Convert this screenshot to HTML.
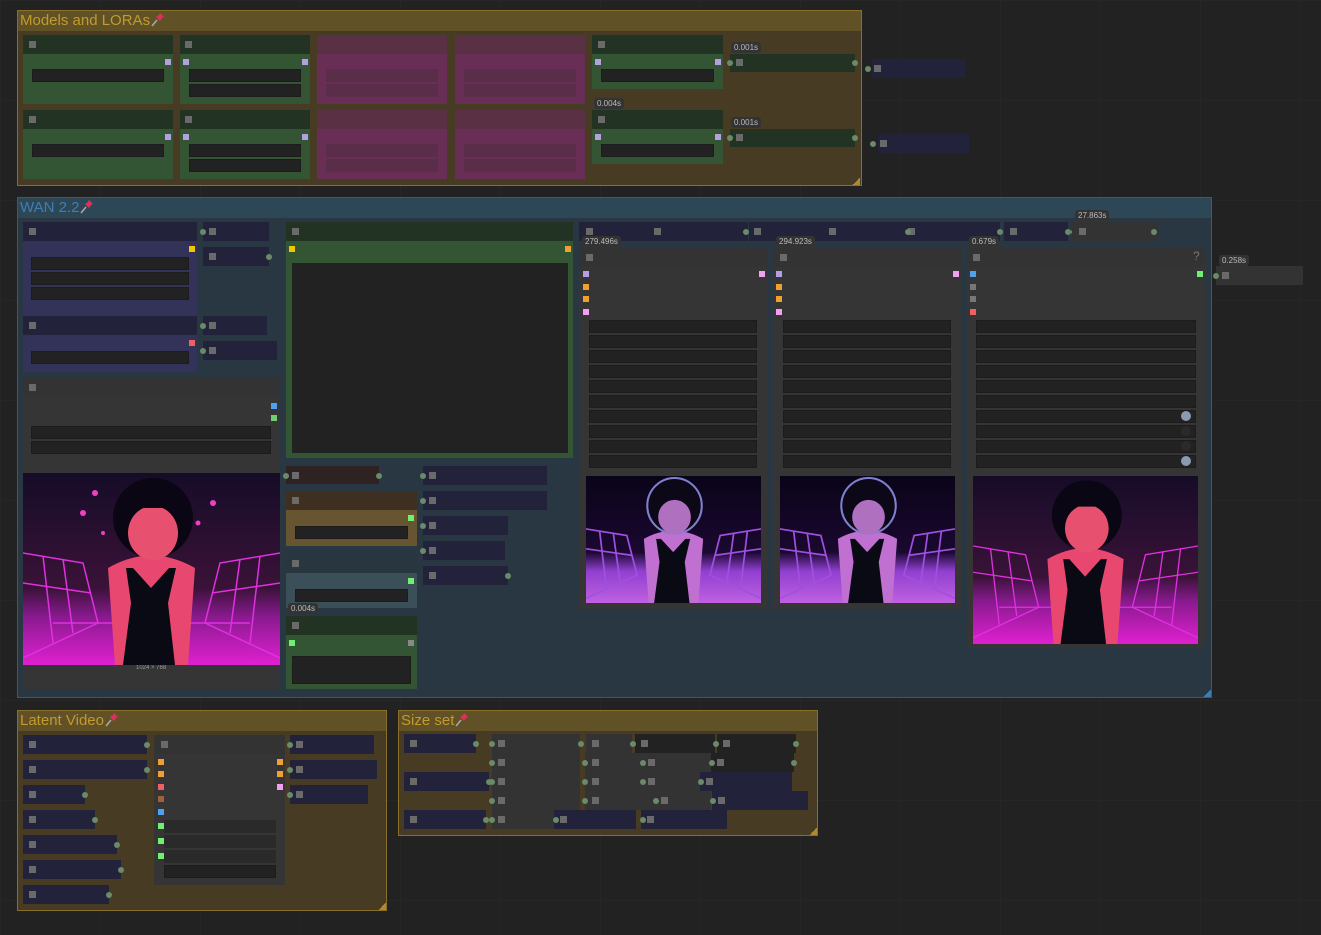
<!DOCTYPE html>
<html><head><meta charset="utf-8">
<style>
*{margin:0;padding:0;box-sizing:border-box}
body{width:1321px;height:935px;background:#222;position:relative;overflow:hidden;font-family:"Liberation Sans",sans-serif}
.b{position:absolute}
.grp{position:absolute;border:1px solid #8a6f2a}
.gh{position:absolute;left:0;top:0;right:0;height:20px;font-size:15px;line-height:20px;padding-left:2px}
.ic{position:absolute;width:7px;height:7px;background:#6a6a6a}
.s{position:absolute;width:6px;height:6px}
.d{position:absolute;width:6px;height:6px;border-radius:50%;background:#6a8a6a}
.w{position:absolute;background:#222;border:1px solid #1c1c1c}
.t{position:absolute;font-size:8px;color:#bbb;background:#333;padding:1px 3px;border-radius:3px;font-family:"Liberation Sans",sans-serif}
.grid{position:absolute;inset:0;background-image:linear-gradient(#262626 1px,transparent 1px),linear-gradient(90deg,#262626 1px,transparent 1px);background-size:100px 100px}
</style></head><body>
<div class="grid"></div>

<!-- Models and LORAs -->
<div class="grp" style="left:17px;top:10px;width:845px;height:176px;background:#473b24">
 <div class="gh" style="background:#615126;color:#c29a2e">Models and LORAs<svg width="16" height="16" viewBox="0 0 16 16" style="vertical-align:-2px"><path d="M2 15 L7 9" stroke="#aaa" stroke-width="1.5"/><path d="M6 6 L10 10 L12 7 L14 6 L10 2 L9 4 Z" fill="#e0305a"/></svg></div>
</div>
<!-- row1 -->
<div class="b" style="left:23px;top:35px;width:150px;height:19px;background:#233323"></div>
<div class="b" style="left:23px;top:54px;width:150px;height:50px;background:#335533"></div>
<div class="ic" style="left:29px;top:41px"></div>
<div class="s" style="left:165px;top:59px;background:#b4a0e0"></div>
<div class="w" style="left:32px;top:69px;width:132px;height:13px"></div>
<div class="b" style="left:180px;top:35px;width:130px;height:19px;background:#233323"></div>
<div class="b" style="left:180px;top:54px;width:130px;height:50px;background:#335533"></div>
<div class="ic" style="left:185px;top:41px"></div>
<div class="s" style="left:183px;top:59px;background:#b4a0e0"></div>
<div class="s" style="left:302px;top:59px;background:#b4a0e0"></div>
<div class="w" style="left:189px;top:69px;width:112px;height:13px"></div>
<div class="w" style="left:189px;top:84px;width:112px;height:13px"></div>
<div class="b" style="left:317px;top:35px;width:130px;height:19px;background:#5a3045"></div>
<div class="b" style="left:317px;top:54px;width:130px;height:50px;background:#692e55"></div>
<div class="b" style="left:326px;top:69px;width:112px;height:13px;background:#5a2d48"></div>
<div class="b" style="left:326px;top:84px;width:112px;height:13px;background:#5a2d48"></div>
<div class="b" style="left:455px;top:35px;width:130px;height:19px;background:#5a3045"></div>
<div class="b" style="left:455px;top:54px;width:130px;height:50px;background:#692e55"></div>
<div class="b" style="left:464px;top:69px;width:112px;height:13px;background:#5a2d48"></div>
<div class="b" style="left:464px;top:84px;width:112px;height:13px;background:#5a2d48"></div>
<div class="b" style="left:592px;top:35px;width:131px;height:19px;background:#233323"></div>
<div class="b" style="left:592px;top:54px;width:131px;height:35px;background:#335533"></div>
<div class="ic" style="left:598px;top:41px"></div>
<div class="s" style="left:595px;top:59px;background:#b4a0e0"></div>
<div class="s" y style="left:715px;top:59px;background:#b4a0e0"></div>
<div class="w" style="left:601px;top:69px;width:113px;height:13px"></div>
<div class="b" style="left:730px;top:54px;width:125px;height:18px;background:#233323"></div>
<div class="ic" style="left:736px;top:59px"></div><div class="d" style="left:727px;top:60px"></div><div class="d" style="left:852px;top:60px"></div>
<div class="t" style="left:731px;top:42px">0.001s</div>
<!-- row2 -->
<div class="b" style="left:23px;top:110px;width:150px;height:19px;background:#233323"></div>
<div class="b" style="left:23px;top:129px;width:150px;height:50px;background:#335533"></div>
<div class="ic" style="left:29px;top:116px"></div>
<div class="s" style="left:165px;top:134px;background:#b4a0e0"></div>
<div class="w" style="left:32px;top:144px;width:132px;height:13px"></div>
<div class="b" style="left:180px;top:110px;width:130px;height:19px;background:#233323"></div>
<div class="b" style="left:180px;top:129px;width:130px;height:50px;background:#335533"></div>
<div class="ic" style="left:185px;top:116px"></div>
<div class="s" style="left:183px;top:134px;background:#b4a0e0"></div>
<div class="s" style="left:302px;top:134px;background:#b4a0e0"></div>
<div class="w" style="left:189px;top:144px;width:112px;height:13px"></div>
<div class="w" style="left:189px;top:159px;width:112px;height:13px"></div>
<div class="b" style="left:317px;top:110px;width:130px;height:19px;background:#5a3045"></div>
<div class="b" style="left:317px;top:129px;width:130px;height:50px;background:#692e55"></div>
<div class="b" style="left:326px;top:144px;width:112px;height:13px;background:#5a2d48"></div>
<div class="b" style="left:326px;top:159px;width:112px;height:13px;background:#5a2d48"></div>
<div class="b" style="left:455px;top:110px;width:130px;height:19px;background:#5a3045"></div>
<div class="b" style="left:455px;top:129px;width:130px;height:50px;background:#692e55"></div>
<div class="b" style="left:464px;top:144px;width:112px;height:13px;background:#5a2d48"></div>
<div class="b" style="left:464px;top:159px;width:112px;height:13px;background:#5a2d48"></div>
<div class="b" style="left:592px;top:110px;width:131px;height:19px;background:#233323"></div>
<div class="b" style="left:592px;top:129px;width:131px;height:35px;background:#335533"></div>
<div class="ic" style="left:598px;top:116px"></div>
<div class="s" style="left:595px;top:134px;background:#b4a0e0"></div>
<div class="s" style="left:715px;top:134px;background:#b4a0e0"></div>
<div class="w" style="left:601px;top:144px;width:113px;height:13px"></div>
<div class="t" style="left:594px;top:98px">0.004s</div>
<div class="b" style="left:730px;top:129px;width:125px;height:18px;background:#233323"></div>
<div class="ic" style="left:736px;top:134px"></div><div class="d" style="left:727px;top:135px"></div><div class="d" style="left:852px;top:135px"></div>
<div class="t" style="left:731px;top:117px">0.001s</div>
<div class="b" style="left:852px;top:178px;width:8px;height:7px;background:linear-gradient(135deg,transparent 50%,#b08a30 50%)"></div>
<!-- outside -->
<div class="b" style="left:872px;top:59px;width:93px;height:19px;background:#22223a"></div>
<div class="ic" style="left:874px;top:65px"></div><div class="d" style="left:865px;top:66px"></div>
<div class="b" style="left:878px;top:134px;width:91px;height:19px;background:#22223a"></div>
<div class="ic" style="left:880px;top:140px"></div><div class="d" style="left:870px;top:141px"></div>

<!-- WAN 2.2 -->
<div class="grp" style="left:17px;top:197px;width:1195px;height:501px;background:#283742;border-color:#3a5a70">
 <div class="gh" style="background:#2e4757;color:#3f7fb0">WAN 2.2<svg width="16" height="16" viewBox="0 0 16 16" style="vertical-align:-2px"><path d="M2 15 L7 9" stroke="#aaa" stroke-width="1.5"/><path d="M6 6 L10 10 L12 7 L14 6 L10 2 L9 4 Z" fill="#e0305a"/></svg></div>
</div>
<div class="b" style="left:1203px;top:690px;width:8px;height:7px;background:linear-gradient(135deg,transparent 50%,#3a7fb0 50%)"></div>
<!-- A -->
<div class="b" style="left:23px;top:222px;width:174px;height:19px;background:#22223a"></div>
<div class="b" style="left:23px;top:241px;width:174px;height:93px;background:#33335a"></div>
<div class="ic" style="left:29px;top:228px"></div>
<div class="s" style="left:189px;top:246px;background:#f0c800"></div>
<div class="w" style="left:31px;top:257px;width:158px;height:13px"></div>
<div class="w" style="left:31px;top:272px;width:158px;height:13px"></div>
<div class="w" style="left:31px;top:287px;width:158px;height:13px"></div>
<div class="b" style="left:203px;top:222px;width:66px;height:19px;background:#22223a"></div>
<div class="ic" style="left:209px;top:228px"></div><div class="d" style="left:200px;top:229px"></div>
<div class="b" style="left:203px;top:247px;width:66px;height:19px;background:#22223a"></div>
<div class="ic" style="left:209px;top:253px"></div><div class="d" style="left:266px;top:254px"></div>
<!-- B -->
<div class="b" style="left:23px;top:316px;width:174px;height:19px;background:#22223a"></div>
<div class="b" style="left:23px;top:335px;width:174px;height:37px;background:#33335a"></div>
<div class="ic" style="left:29px;top:322px"></div>
<div class="s" style="left:189px;top:340px;background:#f06060"></div>
<div class="w" style="left:31px;top:351px;width:158px;height:13px"></div>
<div class="b" style="left:203px;top:316px;width:64px;height:19px;background:#22223a"></div>
<div class="ic" style="left:209px;top:322px"></div><div class="d" style="left:200px;top:323px"></div>
<div class="b" style="left:203px;top:341px;width:74px;height:19px;background:#22223a"></div>
<div class="ic" style="left:209px;top:347px"></div><div class="d" style="left:200px;top:348px"></div>
<!-- C -->
<div class="b" style="left:23px;top:378px;width:257px;height:19px;background:#333"></div>
<div class="b" style="left:23px;top:397px;width:257px;height:293px;background:#353535"></div>
<div class="ic" style="left:29px;top:384px"></div>
<div class="s" style="left:271px;top:403px;background:#50a0f0"></div>
<div class="s" style="left:271px;top:415px;background:#70d070"></div>
<div class="w" style="left:31px;top:426px;width:240px;height:13px"></div>
<div class="w" style="left:31px;top:441px;width:240px;height:13px"></div>
<div class="b" style="left:136px;top:665px;font-size:6px;color:#999">1024 × 768</div>

<!-- D -->
<div class="b" style="left:286px;top:222px;width:287px;height:19px;background:#233323"></div>
<div class="b" style="left:286px;top:241px;width:287px;height:217px;background:#335533"></div>
<div class="ic" style="left:292px;top:228px"></div>
<div class="s" style="left:289px;top:246px;background:#f0c800"></div>
<div class="s" style="left:565px;top:246px;background:#f0a030"></div>
<div class="b" style="left:292px;top:263px;width:276px;height:190px;background:#222"></div>
<!-- lower middle -->
<div class="b" style="left:286px;top:466px;width:93px;height:18px;background:#2f2222"></div>
<div class="ic" style="left:292px;top:472px"></div><div class="d" style="left:283px;top:473px"></div><div class="d" style="left:376px;top:473px"></div>
<div class="b" style="left:286px;top:491px;width:131px;height:19px;background:#3f2f20"></div>
<div class="b" style="left:286px;top:510px;width:131px;height:36px;background:#665530"></div>
<div class="ic" style="left:292px;top:497px"></div>
<div class="s" style="left:408px;top:515px;background:#70f070"></div>
<div class="w" style="left:295px;top:526px;width:113px;height:13px"></div>
<div class="b" style="left:286px;top:554px;width:131px;height:19px;background:#283640"></div>
<div class="b" style="left:286px;top:573px;width:131px;height:35px;background:#3a4f58"></div>
<div class="ic" style="left:292px;top:560px"></div>
<div class="s" style="left:408px;top:578px;background:#70f070"></div>
<div class="w" style="left:295px;top:589px;width:113px;height:13px"></div>
<div class="b" style="left:286px;top:616px;width:131px;height:19px;background:#233323"></div>
<div class="b" style="left:286px;top:635px;width:131px;height:54px;background:#335533"></div>
<div class="ic" style="left:292px;top:622px"></div>
<div class="s" style="left:289px;top:640px;background:#70f070"></div>
<div class="s" style="left:408px;top:640px;background:#888"></div>
<div class="w" style="left:292px;top:656px;width:119px;height:28px"></div>
<div class="t" style="left:288px;top:603px">0.004s</div>
<div class="b" style="left:423px;top:466px;width:124px;height:19px;background:#22223a"></div><div class="ic" style="left:429px;top:472px"></div><div class="d" style="left:420px;top:473px"></div>
<div class="b" style="left:423px;top:491px;width:124px;height:19px;background:#22223a"></div><div class="ic" style="left:429px;top:497px"></div><div class="d" style="left:420px;top:498px"></div>
<div class="b" style="left:423px;top:516px;width:85px;height:19px;background:#22223a"></div><div class="ic" style="left:429px;top:522px"></div><div class="d" style="left:420px;top:523px"></div>
<div class="b" style="left:423px;top:541px;width:82px;height:19px;background:#22223a"></div><div class="ic" style="left:429px;top:547px"></div><div class="d" style="left:420px;top:548px"></div>
<div class="b" style="left:423px;top:566px;width:85px;height:19px;background:#22223a"></div><div class="ic" style="left:429px;top:572px"></div><div class="d" style="left:505px;top:573px"></div>

<!-- top bar -->
<div class="b" style="left:579px;top:222px;width:169px;height:19px;background:#22223a"></div>
<div class="ic" style="left:586px;top:228px"></div><div class="ic" style="left:654px;top:228px"></div><div class="d" style="left:743px;top:229px"></div>
<div class="b" style="left:749px;top:222px;width:251px;height:19px;background:#22223a"></div>
<div class="ic" style="left:754px;top:228px"></div><div class="ic" style="left:829px;top:228px"></div><div class="ic" style="left:908px;top:228px"></div><div class="d" style="left:905px;top:229px"></div><div class="d" style="left:997px;top:229px"></div>
<div class="b" style="left:1004px;top:222px;width:64px;height:19px;background:#22223a"></div>
<div class="ic" style="left:1010px;top:228px"></div><div class="d" style="left:1065px;top:229px"></div><div class="d" style="left:1071px;top:229px"></div>
<div class="b" style="left:1072px;top:222px;width:86px;height:19px;background:#333"></div>
<div class="ic" style="left:1079px;top:228px"></div><div class="d" style="left:1151px;top:229px"></div>
<div class="t" style="left:1075px;top:210px">27.863s</div>

<!-- KSamplers -->
<div class="b" style="left:579px;top:248px;width:188px;height:19px;background:#333"></div>
<div class="b" style="left:579px;top:267px;width:188px;height:343px;background:#353535"></div>
<div class="ic" style="left:586px;top:254px"></div>
<div class="t" style="left:582px;top:236px">279.496s</div>
<div class="s" style="left:583px;top:271px;background:#b4a0e0"></div><div class="s" style="left:759px;top:271px;background:#f0a0f0"></div>
<div class="s" style="left:583px;top:284px;background:#f0a030"></div><div class="s" style="left:583px;top:296px;background:#f0a030"></div><div class="s" style="left:583px;top:309px;background:#f0a0f0"></div>

<div class="b" style="left:773px;top:248px;width:188px;height:19px;background:#333"></div>
<div class="b" style="left:773px;top:267px;width:188px;height:343px;background:#353535"></div>
<div class="ic" style="left:780px;top:254px"></div>
<div class="t" style="left:776px;top:236px">294.923s</div>
<div class="s" style="left:776px;top:271px;background:#b4a0e0"></div><div class="s" style="left:953px;top:271px;background:#f0a0f0"></div>
<div class="s" style="left:776px;top:284px;background:#f0a030"></div><div class="s" style="left:776px;top:296px;background:#f0a030"></div><div class="s" style="left:776px;top:309px;background:#f0a0f0"></div>

<div class="b" style="left:967px;top:248px;width:238px;height:19px;background:#333"></div>
<div class="b" style="left:967px;top:267px;width:238px;height:381px;background:#353535"></div>
<div class="ic" style="left:973px;top:254px"></div>
<div class="b" style="left:1193px;top:249px;font-size:12px;color:#777">?</div>
<div class="t" style="left:969px;top:236px">0.679s</div>
<div class="s" style="left:970px;top:271px;background:#50a0f0"></div><div class="s" style="left:1197px;top:271px;background:#70f070"></div>
<div class="s" style="left:970px;top:284px;background:#777"></div><div class="s" style="left:970px;top:296px;background:#777"></div><div class="s" style="left:970px;top:309px;background:#f06060"></div>

<div id="rows"></div>
<!-- widget rows -->
<div class="w" style="left:589px;top:320px;width:168px;height:13px"></div><div class="w" style="left:589px;top:335px;width:168px;height:13px"></div><div class="w" style="left:589px;top:350px;width:168px;height:13px"></div><div class="w" style="left:589px;top:365px;width:168px;height:13px"></div><div class="w" style="left:589px;top:380px;width:168px;height:13px"></div><div class="w" style="left:589px;top:395px;width:168px;height:13px"></div><div class="w" style="left:589px;top:410px;width:168px;height:13px"></div><div class="w" style="left:589px;top:425px;width:168px;height:13px"></div><div class="w" style="left:589px;top:440px;width:168px;height:13px"></div><div class="w" style="left:589px;top:455px;width:168px;height:13px"></div>
<div class="w" style="left:783px;top:320px;width:168px;height:13px"></div><div class="w" style="left:783px;top:335px;width:168px;height:13px"></div><div class="w" style="left:783px;top:350px;width:168px;height:13px"></div><div class="w" style="left:783px;top:365px;width:168px;height:13px"></div><div class="w" style="left:783px;top:380px;width:168px;height:13px"></div><div class="w" style="left:783px;top:395px;width:168px;height:13px"></div><div class="w" style="left:783px;top:410px;width:168px;height:13px"></div><div class="w" style="left:783px;top:425px;width:168px;height:13px"></div><div class="w" style="left:783px;top:440px;width:168px;height:13px"></div><div class="w" style="left:783px;top:455px;width:168px;height:13px"></div>
<div class="w" style="left:976px;top:320px;width:220px;height:13px"></div><div class="w" style="left:976px;top:335px;width:220px;height:13px"></div><div class="w" style="left:976px;top:350px;width:220px;height:13px"></div><div class="w" style="left:976px;top:365px;width:220px;height:13px"></div><div class="w" style="left:976px;top:380px;width:220px;height:13px"></div><div class="w" style="left:976px;top:395px;width:220px;height:13px"></div><div class="w" style="left:976px;top:410px;width:220px;height:13px"></div><div class="w" style="left:976px;top:425px;width:220px;height:13px"></div><div class="w" style="left:976px;top:440px;width:220px;height:13px"></div><div class="w" style="left:976px;top:455px;width:220px;height:13px"></div>
<div class="b" style="left:1181px;top:411px;width:10px;height:10px;border-radius:50%;background:#8a9ab0"></div>
<div class="b" style="left:1181px;top:426px;width:10px;height:10px;border-radius:50%;background:#2a2a2a"></div>
<div class="b" style="left:1181px;top:441px;width:10px;height:10px;border-radius:50%;background:#2a2a2a"></div>
<div class="b" style="left:1181px;top:456px;width:10px;height:10px;border-radius:50%;background:#8a9ab0"></div>

<!-- outside -->
<div class="b" style="left:1216px;top:266px;width:87px;height:19px;background:#333"></div>
<div class="ic" style="left:1222px;top:272px"></div><div class="d" style="left:1213px;top:273px"></div>
<div class="t" style="left:1219px;top:255px">0.258s</div>

<!-- images -->
<svg class="b" style="left:23px;top:473px" width="257" height="192" viewBox="0 0 257 192" preserveAspectRatio="none">
<defs><linearGradient id="g1" x1="0" y1="0" x2="0" y2="1"><stop offset="0" stop-color="#160c28"/><stop offset=".6" stop-color="#3a1238"/><stop offset=".75" stop-color="#8a1a90"/><stop offset="1" stop-color="#e020d0"/></linearGradient></defs>
<rect width="257" height="192" fill="url(#g1)"/>
<g stroke="#e030e0" stroke-width="1.5" fill="none"><path d="M0 80 L60 90 L75 150 L0 185"/><path d="M0 110 L68 120"/><path d="M20 83 L30 170 M40 86 L50 160"/><path d="M257 80 L197 90 L182 150 L257 185"/><path d="M257 110 L189 120"/><path d="M237 83 L227 170 M217 86 L207 160"/><path d="M30 150 L227 150"/></g>
<path d="M85 95 Q128 70 172 95 L165 192 L92 192 Z" fill="#e84870"/>
<ellipse cx="130" cy="45" rx="40" ry="40" fill="#0a0614"/>
<ellipse cx="130" cy="60" rx="25" ry="27" fill="#e85070"/>
<path d="M100 40 Q130 0 160 40 L150 35 L110 35 Z" fill="#0a0614"/>
<path d="M103 95 L110 95 L128 115 L146 95 L153 95 L145 130 L152 192 L100 192 L108 130 Z" fill="#0a0a14"/>
<g fill="#f040c0"><circle cx="72" cy="20" r="3"/><circle cx="60" cy="40" r="3"/><circle cx="190" cy="30" r="3"/><circle cx="175" cy="50" r="2.5"/><circle cx="80" cy="60" r="2"/></g>
</svg>

<svg class="b" style="left:586px;top:476px" width="175" height="127" viewBox="0 0 257 192" preserveAspectRatio="none">
<defs><linearGradient id="g2" x1="0" y1="0" x2="0" y2="1"><stop offset="0" stop-color="#0a0418"/><stop offset=".6" stop-color="#1a0830"/><stop offset=".75" stop-color="#9040d0"/><stop offset="1" stop-color="#c060e0"/></linearGradient></defs>
<rect width="257" height="192" fill="url(#g2)"/>
<g stroke="#a050e0" stroke-width="2.5" fill="none"><path d="M0 80 L60 90 L75 150 L0 185"/><path d="M0 110 L68 120"/><path d="M20 83 L30 170 M40 86 L50 160"/><path d="M257 80 L197 90 L182 150 L257 185"/><path d="M257 110 L189 120"/><path d="M237 83 L227 170 M217 86 L207 160"/></g>
<path d="M85 95 Q128 70 172 95 L165 192 L92 192 Z" fill="#c070d0"/>
<ellipse cx="130" cy="45" rx="40" ry="42" fill="#0c0818" stroke="#8080d0" stroke-width="3"/>
<ellipse cx="130" cy="62" rx="24" ry="26" fill="#b070c0"/>
<path d="M103 95 L110 95 L128 115 L146 95 L153 95 L145 130 L152 192 L100 192 L108 130 Z" fill="#0a0a14"/>
</svg>
<svg class="b" style="left:780px;top:476px" width="175" height="127" viewBox="0 0 257 192" preserveAspectRatio="none">
<rect width="257" height="192" fill="url(#g2)"/>
<g stroke="#a050e0" stroke-width="2.5" fill="none"><path d="M0 80 L60 90 L75 150 L0 185"/><path d="M0 110 L68 120"/><path d="M20 83 L30 170 M40 86 L50 160"/><path d="M257 80 L197 90 L182 150 L257 185"/><path d="M257 110 L189 120"/><path d="M237 83 L227 170 M217 86 L207 160"/></g>
<path d="M85 95 Q128 70 172 95 L165 192 L92 192 Z" fill="#c070d0"/>
<ellipse cx="130" cy="45" rx="40" ry="42" fill="#0c0818" stroke="#8080d0" stroke-width="3"/>
<ellipse cx="130" cy="62" rx="24" ry="26" fill="#b070c0"/>
<path d="M103 95 L110 95 L128 115 L146 95 L153 95 L145 130 L152 192 L100 192 L108 130 Z" fill="#0a0a14"/>
</svg>
<svg class="b" style="left:973px;top:476px" width="225" height="168" viewBox="0 0 257 192" preserveAspectRatio="none">
<rect width="257" height="192" fill="url(#g1)"/>
<g stroke="#e030e0" stroke-width="1.5" fill="none"><path d="M0 80 L60 90 L75 150 L0 185"/><path d="M0 110 L68 120"/><path d="M20 83 L30 170 M40 86 L50 160"/><path d="M257 80 L197 90 L182 150 L257 185"/><path d="M257 110 L189 120"/><path d="M237 83 L227 170 M217 86 L207 160"/><path d="M30 150 L227 150"/></g>
<path d="M85 95 Q128 70 172 95 L165 192 L92 192 Z" fill="#e84870"/>
<ellipse cx="130" cy="45" rx="40" ry="40" fill="#0a0614"/>
<ellipse cx="130" cy="60" rx="25" ry="27" fill="#e85070"/>
<path d="M100 40 Q130 0 160 40 L150 35 L110 35 Z" fill="#0a0614"/>
<path d="M103 95 L110 95 L128 115 L146 95 L153 95 L145 130 L152 192 L100 192 L108 130 Z" fill="#0a0a14"/>
</svg>

<!-- Latent Video -->
<div class="grp" style="left:17px;top:710px;width:370px;height:201px;background:#473b24">
 <div class="gh" style="background:#615126;color:#c29a2e">Latent Video<svg width="16" height="16" viewBox="0 0 16 16" style="vertical-align:-2px"><path d="M2 15 L7 9" stroke="#aaa" stroke-width="1.5"/><path d="M6 6 L10 10 L12 7 L14 6 L10 2 L9 4 Z" fill="#e0305a"/></svg></div>
</div>
<div class="b" style="left:378px;top:903px;width:8px;height:7px;background:linear-gradient(135deg,transparent 50%,#b08a30 50%)"></div>
<div class="b" style="left:23px;top:735px;width:124px;height:19px;background:#22223a"></div><div class="ic" style="left:29px;top:741px"></div><div class="d" style="left:144px;top:742px"></div>
<div class="b" style="left:23px;top:760px;width:124px;height:19px;background:#22223a"></div><div class="ic" style="left:29px;top:766px"></div><div class="d" style="left:144px;top:767px"></div>
<div class="b" style="left:23px;top:785px;width:62px;height:19px;background:#22223a"></div><div class="ic" style="left:29px;top:791px"></div><div class="d" style="left:82px;top:792px"></div>
<div class="b" style="left:23px;top:810px;width:72px;height:19px;background:#22223a"></div><div class="ic" style="left:29px;top:816px"></div><div class="d" style="left:92px;top:817px"></div>
<div class="b" style="left:23px;top:835px;width:94px;height:19px;background:#22223a"></div><div class="ic" style="left:29px;top:841px"></div><div class="d" style="left:114px;top:842px"></div>
<div class="b" style="left:23px;top:860px;width:98px;height:19px;background:#22223a"></div><div class="ic" style="left:29px;top:866px"></div><div class="d" style="left:118px;top:867px"></div>
<div class="b" style="left:23px;top:885px;width:86px;height:19px;background:#22223a"></div><div class="ic" style="left:29px;top:891px"></div><div class="d" style="left:106px;top:892px"></div>
<div class="b" style="left:154px;top:735px;width:131px;height:19px;background:#333"></div>
<div class="b" style="left:154px;top:754px;width:131px;height:131px;background:#353535"></div>
<div class="ic" style="left:161px;top:741px"></div>
<div class="s" style="left:158px;top:759px;background:#f0a030"></div><div class="s" style="left:158px;top:771px;background:#f0a030"></div><div class="s" style="left:158px;top:784px;background:#f06060"></div><div class="s" style="left:158px;top:796px;background:#a06040"></div><div class="s" style="left:158px;top:809px;background:#50a0f0"></div><div class="s" style="left:158px;top:823px;background:#70f070"></div><div class="s" style="left:158px;top:838px;background:#70f070"></div><div class="s" style="left:158px;top:853px;background:#70f070"></div>
<div class="s" style="left:277px;top:759px;background:#f0a030"></div><div class="s" style="left:277px;top:771px;background:#f0a030"></div><div class="s" style="left:277px;top:784px;background:#f0a0f0"></div>
<div class="b" style="left:164px;top:820px;width:112px;height:13px;background:#2a2a2a"></div>
<div class="b" style="left:164px;top:835px;width:112px;height:13px;background:#2a2a2a"></div>
<div class="b" style="left:164px;top:850px;width:112px;height:13px;background:#2a2a2a"></div>
<div class="w" style="left:164px;top:865px;width:112px;height:13px"></div>
<div class="b" style="left:290px;top:735px;width:84px;height:19px;background:#22223a"></div><div class="ic" style="left:296px;top:741px"></div><div class="d" style="left:287px;top:742px"></div>
<div class="b" style="left:290px;top:760px;width:87px;height:19px;background:#22223a"></div><div class="ic" style="left:296px;top:766px"></div><div class="d" style="left:287px;top:767px"></div>
<div class="b" style="left:290px;top:785px;width:78px;height:19px;background:#22223a"></div><div class="ic" style="left:296px;top:791px"></div><div class="d" style="left:287px;top:792px"></div>

<!-- Size set -->
<div class="grp" style="left:398px;top:710px;width:420px;height:126px;background:#473b24">
 <div class="gh" style="background:#615126;color:#c29a2e">Size set<svg width="16" height="16" viewBox="0 0 16 16" style="vertical-align:-2px"><path d="M2 15 L7 9" stroke="#aaa" stroke-width="1.5"/><path d="M6 6 L10 10 L12 7 L14 6 L10 2 L9 4 Z" fill="#e0305a"/></svg></div>
</div>
<div class="b" style="left:809px;top:828px;width:8px;height:7px;background:linear-gradient(135deg,transparent 50%,#b08a30 50%)"></div>
<div class="b" style="left:404px;top:734px;width:72px;height:19px;background:#22223a"></div><div class="ic" style="left:410px;top:740px"></div><div class="d" style="left:473px;top:741px"></div>
<div class="b" style="left:404px;top:772px;width:85px;height:19px;background:#22223a"></div><div class="ic" style="left:410px;top:778px"></div><div class="d" style="left:486px;top:779px"></div>
<div class="b" style="left:404px;top:810px;width:82px;height:19px;background:#22223a"></div><div class="ic" style="left:410px;top:816px"></div><div class="d" style="left:483px;top:817px"></div>
<div class="b" style="left:492px;top:734px;width:88px;height:95px;background:#333"></div>
<div class="b" style="left:586px;top:734px;width:46px;height:19px;background:#333"></div>
<div class="b" style="left:585px;top:753px;width:126px;height:57px;background:#333"></div>
<div class="b" style="left:635px;top:734px;width:80px;height:19px;background:#222"></div>
<div class="b" style="left:717px;top:734px;width:79px;height:19px;background:#222"></div>
<div class="b" style="left:711px;top:753px;width:83px;height:19px;background:#222"></div>
<div class="b" style="left:700px;top:772px;width:92px;height:19px;background:#22223a"></div>
<div class="b" style="left:712px;top:791px;width:96px;height:19px;background:#22223a"></div>
<div class="b" style="left:554px;top:810px;width:82px;height:19px;background:#22223a"></div>
<div class="b" style="left:641px;top:810px;width:86px;height:19px;background:#22223a"></div>
<div class="ic" style="left:498px;top:740px"></div><div class="ic" style="left:498px;top:759px"></div><div class="ic" style="left:498px;top:778px"></div><div class="ic" style="left:498px;top:797px"></div><div class="ic" style="left:498px;top:816px"></div>
<div class="ic" style="left:592px;top:740px"></div><div class="ic" style="left:592px;top:759px"></div><div class="ic" style="left:592px;top:778px"></div><div class="ic" style="left:592px;top:797px"></div>
<div class="ic" style="left:641px;top:740px"></div><div class="ic" style="left:723px;top:740px"></div><div class="ic" style="left:648px;top:759px"></div><div class="ic" style="left:717px;top:759px"></div><div class="ic" style="left:648px;top:778px"></div><div class="ic" style="left:706px;top:778px"></div><div class="ic" style="left:661px;top:797px"></div><div class="ic" style="left:718px;top:797px"></div><div class="ic" style="left:560px;top:816px"></div><div class="ic" style="left:647px;top:816px"></div>
<div class="d" style="left:489px;top:741px"></div><div class="d" style="left:489px;top:760px"></div><div class="d" style="left:489px;top:779px"></div><div class="d" style="left:489px;top:798px"></div><div class="d" style="left:489px;top:817px"></div>
<div class="d" style="left:578px;top:741px"></div><div class="d" style="left:582px;top:760px"></div><div class="d" style="left:582px;top:779px"></div><div class="d" style="left:582px;top:798px"></div><div class="d" style="left:553px;top:817px"></div>
<div class="d" style="left:630px;top:741px"></div><div class="d" style="left:713px;top:741px"></div><div class="d" style="left:793px;top:741px"></div><div class="d" style="left:640px;top:760px"></div><div class="d" style="left:709px;top:760px"></div><div class="d" style="left:791px;top:760px"></div><div class="d" style="left:640px;top:779px"></div><div class="d" style="left:698px;top:779px"></div><div class="d" style="left:653px;top:798px"></div><div class="d" style="left:710px;top:798px"></div><div class="d" style="left:640px;top:817px"></div>
</body></html>
